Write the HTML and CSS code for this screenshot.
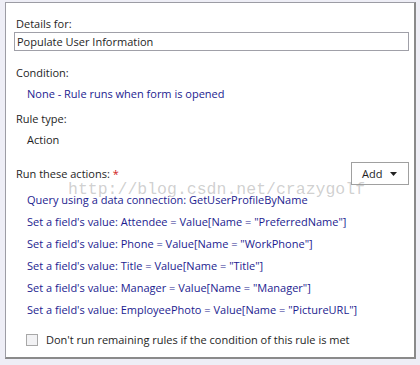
FILE: index.html
```html
<!DOCTYPE html>
<html lang="en">
<head>
  <meta charset="UTF-8" />
  <title>Rule Details</title>
  <link rel="stylesheet" href="styles.css">
</head>
<body>
  <div class="rule-panel">
    <div class="label">Details for:</div>
    <input class="name-input" type="text" value="Populate User Information" />

    <div class="label section">Condition:</div>
    <div class="value link">None - Rule runs when form is opened</div>

    <div class="label section-sm">Rule type:</div>
    <div class="value">Action</div>

    <div class="actions-head">
      <div class="label">Run these actions:<span class="required">*</span></div>
      <button class="add-btn">Add
        <svg width="7" height="4" viewBox="0 0 7 4"><path d="M0 0h7L3.5 4z" fill="#222"/></svg>
      </button>
    </div>

    <ul class="action-list">
      <li>Query using a data connection: GetUserProfileByName</li>
      <li>Set a field's value: Attendee = Value[Name = "PreferredName"]</li>
      <li>Set a field's value: Phone = Value[Name = "WorkPhone"]</li>
      <li>Set a field's value: Title = Value[Name = "Title"]</li>
      <li>Set a field's value: Manager = Value[Name = "Manager"]</li>
      <li>Set a field's value: EmployeePhoto = Value[Name = "PictureURL"]</li>
    </ul>

    <label class="stop-row">
      <span class="check"></span>
      Don't run remaining rules if the condition of this rule is met
    </label>

    <div class="watermark">http://blog.csdn.net/crazygolf</div>
  </div>
</body>
</html>
```

FILE: styles.css
```css
body {
  margin: 0;
  background-color: #eeeef6;
  font-family: 'Segoe UI', 'Open Sans', sans-serif;
  font-size: 11px;
  color: #1e1e1e;
}

.rule-panel {
  position: relative;
  height: 357px;
  margin: 2px 4px 0 5px;
  padding: 13px 5px 0 8px;
  background-color: #fff;
  border: 1px solid #9c9ca4;
  border-right: 2px solid #8a8a8a;
  border-bottom: 2px solid #8a8a8a;
  box-sizing: border-box;
}

.label,
.value {
  line-height: 16px;
  padding-left: 2px;
}

.value {
  padding-left: 13px;
  margin-top: 5px;
}

.link {
  color: #1c1c90;
}

.section {
  margin-top: 14px;
}

.section-sm {
  margin-top: 9px;
}

.name-input {
  display: block;
  width: 100%;
  height: 19px;
  margin: 0;
  padding: 0 2px;
  box-sizing: border-box;
  border: 1px solid #a0a0a8;
  font: inherit;
  color: #1e1e1e;
}

.required {
  color: #d02020;
  margin-left: 3px;
}

.actions-head {
  display: flex;
  align-items: center;
  justify-content: space-between;
  margin-top: 14px;
}

.add-btn {
  display: flex;
  align-items: center;
  gap: 8px;
  width: 58px;
  height: 23px;
  padding: 0 0 0 10px;
  background-color: #fff;
  border: 1px solid #a0a0a0;
  font: inherit;
  color: #1e1e1e;
}

.action-list {
  list-style: none;
  margin: 4px 0 0;
  padding: 0 0 0 13px;
  color: #1c1c90;
}

.action-list li {
  line-height: 22px;
}

.stop-row {
  display: flex;
  align-items: center;
  gap: 8px;
  margin-top: 11px;
  padding-left: 12px;
  line-height: 16px;
}

.check {
  width: 10px;
  height: 10px;
  border: 1px solid #a8a8a8;
  background-color: #f2f2f4;
}

.watermark {
  position: absolute;
  left: 62px;
  top: 177px;
  font-family: 'Liberation Mono', monospace;
  font-size: 16.5px;
  color: rgba(150, 150, 150, 0.45);
  pointer-events: none;
}
```
